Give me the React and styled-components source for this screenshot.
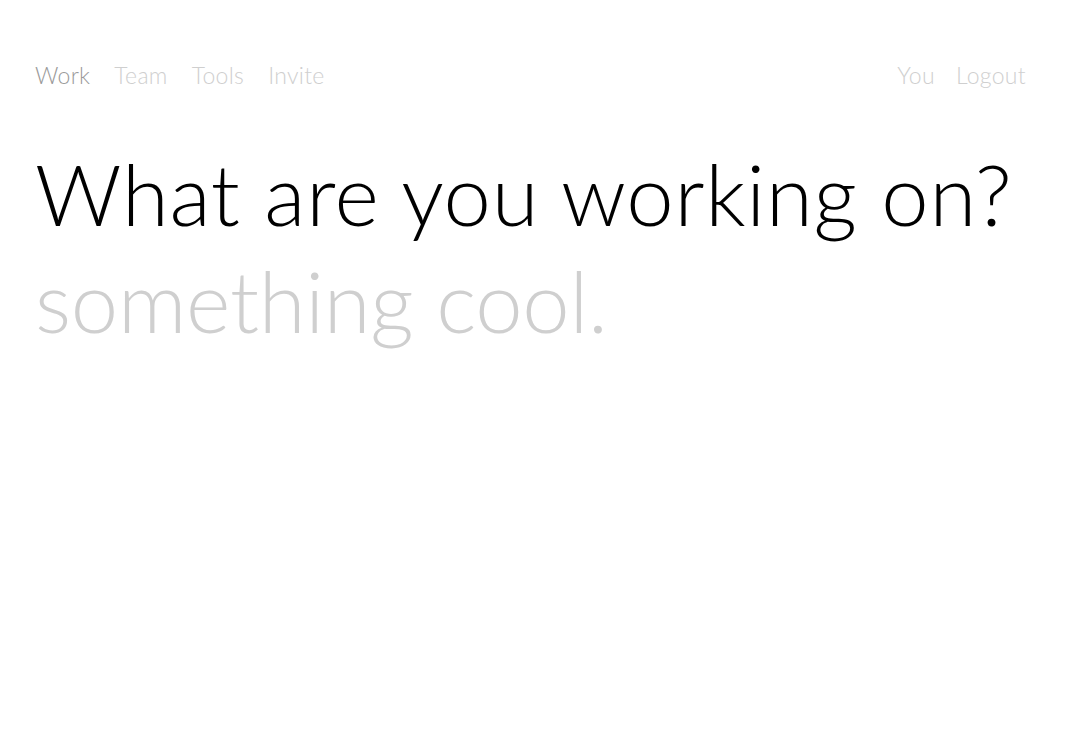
import React from 'react'
import styled, { createGlobalStyle } from 'styled-components'

const Global = createGlobalStyle`
  html, body {
    margin: 0;
    background: #fff;
  }
  body {
    font-family: Lato, "Liberation Sans", Arial, sans-serif;
  }
`

const Page = styled.div`
  padding: 61px 48px 0 35px;
`

const Nav = styled.nav`
  display: flex;
  justify-content: space-between;
  align-items: center;
  height: 28px;
`

const NavGroup = styled.ul`
  display: flex;
  gap: ${p => p.gap || 24}px;
  margin: 0;
  padding: 0;
  list-style: none;
`

const NavItem = styled.li`
  font-size: 23px;
  font-weight: 300;
  line-height: 28px;
  letter-spacing: 0.3px;
  color: ${p => (p.active ? '#9a9a9a' : '#cfcfcf')};
  cursor: pointer;
`

const Prompt = styled.h1`
  margin: 51px 0 0;
  font-weight: 300;
  font-size: 85px;
  line-height: 107px;
  letter-spacing: 0.7px;
  white-space: nowrap;
  color: #000;
`

const Answer = styled.div`
  font-weight: 300;
  font-size: 85px;
  line-height: 107px;
  letter-spacing: -0.3px;
  color: #cfcfcf;
`

const App = () => {
  return (
    <>
      <Global />
      <Page>
        <Nav>
          <NavGroup>
            <NavItem active>Work</NavItem>
            <NavItem>Team</NavItem>
            <NavItem>Tools</NavItem>
            <NavItem>Invite</NavItem>
          </NavGroup>
          <NavGroup gap={21}>
            <NavItem>You</NavItem>
            <NavItem>Logout</NavItem>
          </NavGroup>
        </Nav>
        <Prompt>What are you working on?</Prompt>
        <Answer>something cool.</Answer>
      </Page>
    </>
  )
}

export default App
